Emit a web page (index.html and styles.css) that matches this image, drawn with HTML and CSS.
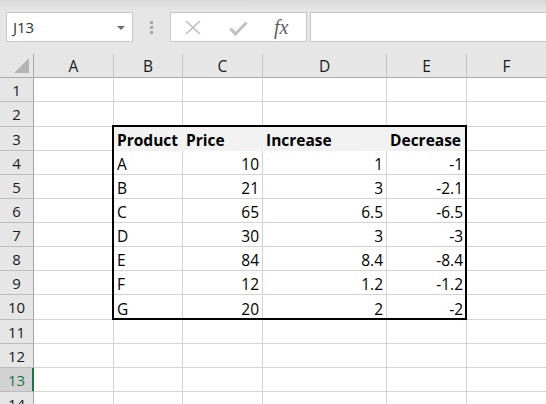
FILE: index.html
```html
<!DOCTYPE html>
<html>
<head>
<meta charset="utf-8">
<link rel="stylesheet" href="styles.css">
</head>
<body>
<div class="toolbar">
  <div class="namebox">
    <span class="nbtext">J13</span>
    <svg class="nbarrow" width="8" height="4" viewBox="0 0 8 4"><polygon points="0,0 8,0 4,4" fill="#6e6e6e"/></svg>
  </div>
  <div class="grip"><i></i><i></i><i></i></div>
  <div class="fbuttons">
    <svg class="icx" width="16" height="15" viewBox="0 0 16 15"><path d="M1 1 L15 14 M15 1 L1 14" stroke="#bdbdbd" stroke-width="1.6" fill="none"/></svg>
    <svg class="icv" width="19" height="15" viewBox="0 0 19 15"><path d="M1.5 7.5 L6.5 13 L17.5 1.5" stroke="#c2c2c2" stroke-width="3" fill="none"/></svg>
    <span class="fx">fx</span>
  </div>
  <div class="finput"></div>
</div>
<div class="sheet">
  <div class="row hdr">
    <div class="corner"><svg width="33" height="23" viewBox="0 0 33 23"><polygon points="14,19 29,19 29,4" fill="#b4b4b4"/></svg></div>
    <div class="ch">A</div><div class="ch">B</div><div class="ch">C</div><div class="ch">D</div><div class="ch">E</div><div class="ch">F</div>
  </div>
  <div class="row"><div class="rh">1</div><div class="c"></div><div class="c"></div><div class="c"></div><div class="c"></div><div class="c"></div><div class="c"></div></div>
  <div class="row tall"><div class="rh">2</div><div class="c"></div><div class="c"></div><div class="c"></div><div class="c"></div><div class="c"></div><div class="c"></div></div>
  <div class="row"><div class="rh">3</div><div class="c"></div><div class="c fill">Product</div><div class="c fill">Price</div><div class="c fill">Increase</div><div class="c fill">Decrease</div><div class="c"></div></div>
  <div class="row"><div class="rh">4</div><div class="c"></div><div class="c">A</div><div class="c num">10</div><div class="c num">1</div><div class="c num">-1</div><div class="c"></div></div>
  <div class="row"><div class="rh">5</div><div class="c"></div><div class="c">B</div><div class="c num">21</div><div class="c num">3</div><div class="c num">-2.1</div><div class="c"></div></div>
  <div class="row"><div class="rh">6</div><div class="c"></div><div class="c">C</div><div class="c num">65</div><div class="c num">6.5</div><div class="c num">-6.5</div><div class="c"></div></div>
  <div class="row"><div class="rh">7</div><div class="c"></div><div class="c">D</div><div class="c num">30</div><div class="c num">3</div><div class="c num">-3</div><div class="c"></div></div>
  <div class="row"><div class="rh">8</div><div class="c"></div><div class="c">E</div><div class="c num">84</div><div class="c num">8.4</div><div class="c num">-8.4</div><div class="c"></div></div>
  <div class="row"><div class="rh">9</div><div class="c"></div><div class="c">F</div><div class="c num">12</div><div class="c num">1.2</div><div class="c num">-1.2</div><div class="c"></div></div>
  <div class="row tall"><div class="rh">10</div><div class="c"></div><div class="c">G</div><div class="c num">20</div><div class="c num">2</div><div class="c num">-2</div><div class="c"></div></div>
  <div class="row"><div class="rh">11</div><div class="c"></div><div class="c"></div><div class="c"></div><div class="c"></div><div class="c"></div><div class="c"></div></div>
  <div class="row"><div class="rh">12</div><div class="c"></div><div class="c"></div><div class="c"></div><div class="c"></div><div class="c"></div><div class="c"></div></div>
  <div class="row"><div class="rh sel">13</div><div class="c"></div><div class="c"></div><div class="c"></div><div class="c"></div><div class="c"></div><div class="c"></div></div>
  <div class="row"><div class="rh">14</div><div class="c"></div><div class="c"></div><div class="c"></div><div class="c"></div><div class="c"></div><div class="c"></div></div>
  <div class="tborder"></div>
</div>
</body>
</html>
```
FILE: styles.css
```css
html, body {
  margin: 0;
  padding: 0;
  width: 546px;
  height: 404px;
  overflow: hidden;
  background: #ffffff;
}
body {
  font-family: "Open Sans", "Noto Sans", sans-serif;
}
.toolbar {
  height: 54px;
  box-sizing: border-box;
  padding-top: 12px;
  background: linear-gradient(#d8d8d8 0px, #e6e6e6 10px, #e6e6e6 100%);
  display: flex;
  align-items: flex-start;
}
.namebox {
  margin-left: 6px;
  width: 127px;
  height: 30px;
  box-sizing: border-box;
  border: 1px solid #c6c6c6;
  background: #fff;
  display: flex;
  align-items: center;
}
.nbtext {
  padding-left: 6px;
  font-size: 15px;
  color: #333;
  line-height: 20px;
}
.nbarrow {
  margin-left: auto;
  margin-right: 7px;
  margin-top: 1px;
}
.grip {
  margin-left: 17px;
  width: 4px;
  height: 30px;
  display: flex;
  flex-direction: column;
  justify-content: center;
  gap: 2px;
}
.grip i {
  display: block;
  width: 3px;
  height: 3px;
  background: #a8a8a8;
}
.fbuttons {
  margin-left: 16px;
  width: 137px;
  height: 30px;
  box-sizing: border-box;
  border: 1px solid #c6c6c6;
  background: #fff;
  display: flex;
  align-items: center;
  padding-left: 14px;
}
.icx { margin-top: 1px; }
.icv { margin-left: 28px; margin-top: 2px; }
.fx {
  margin-left: 26px;
  font-family: "Liberation Serif", "DejaVu Serif", serif;
  font-style: italic;
  font-size: 20px;
  color: #5e5e5e;
  line-height: 20px;
}
.finput {
  margin-left: 3px;
  flex: 1;
  margin-right: -2px;
  height: 30px;
  box-sizing: border-box;
  border: 1px solid #c6c6c6;
  background: #fff;
}
.sheet {
  position: relative;
}
.row {
  display: grid;
  grid-template-columns: 34px 80px 69px 80px 124px 80px 80px;
  height: 24px;
}
.row.tall { height: 25px; }
.hdr {
  background: #e6e6e6;
}
.corner {
  box-sizing: border-box;
  border-right: 1px solid #ababab;
  border-bottom: 1px solid #ababab;
  background: #e6e6e6;
}
.corner svg { display: block; }
.ch {
  box-sizing: border-box;
  border-right: 1px solid #c4c4c4;
  border-bottom: 1px solid #ababab;
  background: #e6e6e6;
  display: flex;
  align-items: center;
  justify-content: center;
  font-size: 15.5px;
  color: #1a1a1a;
  line-height: 20px;
}
.rh {
  box-sizing: border-box;
  border-right: 1px solid #a6a6a6;
  border-bottom: 1px solid #bcbcbc;
  background: #e6e6e6;
  display: flex;
  align-items: center;
  justify-content: center;
  font-size: 15px;
  color: #1a1a1a;
  line-height: 20px;
}
.rh.sel {
  background: #d2d2d2;
  color: #217346;
  border-right-color: #217346;
  box-shadow: inset -1px 0 0 #217346;
}
.c {
  box-sizing: border-box;
  border-right: 1px solid #d4d4d4;
  border-bottom: 1px solid #d4d4d4;
  display: flex;
  align-items: flex-end;
  padding: 0 3px;
  font-size: 15.5px;
  line-height: 20px;
  color: #000;
  white-space: nowrap;
}
.num { justify-content: flex-end; }
.fill {
  background: #f2f2f2;
  border-right-color: #f2f2f2;
  border-bottom-color: #f2f2f2;
  font-weight: bold;
}
.tborder {
  position: absolute;
  left: 112px;
  top: 71px;
  width: 355px;
  height: 195px;
  box-sizing: border-box;
  border: 2px solid #000;
  pointer-events: none;
}
```
